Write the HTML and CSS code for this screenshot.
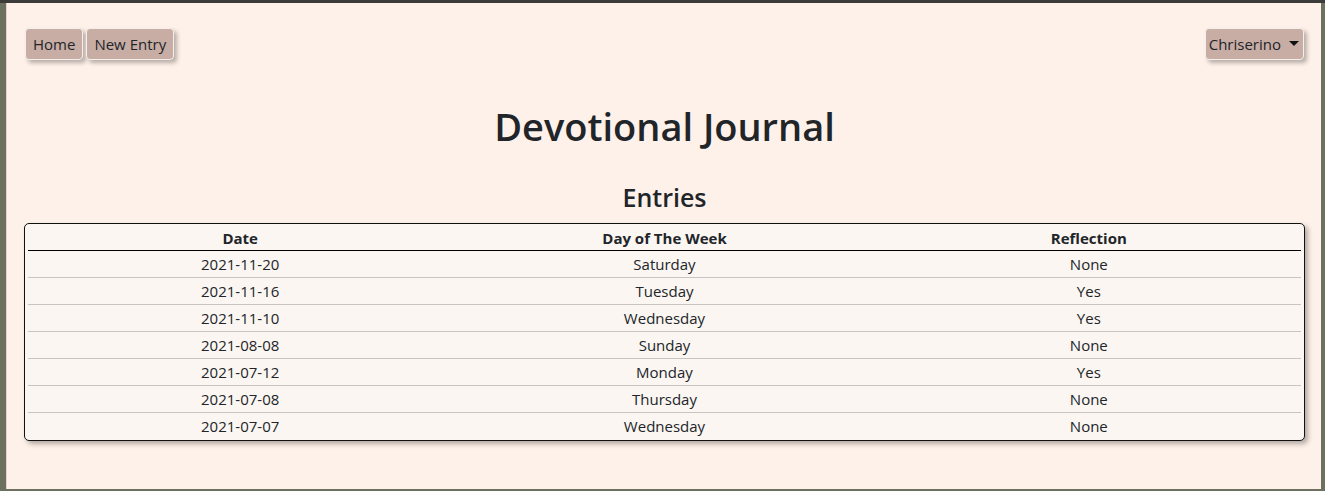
FILE: index.html
```html
<!DOCTYPE html>
<html lang="en">
<head>
<meta charset="utf-8">
<title>Devotional Journal</title>
<link rel="stylesheet" href="styles.css">
</head>
<body>
<div class="frame">
  <nav class="nav">
    <div class="nav-left">
      <a class="btn" href="#">Home</a>
      <a class="btn" href="#">New Entry</a>
    </div>
    <div class="nav-right">
      <a class="btn dropdown" href="#">Chriserino<span class="caret"></span></a>
    </div>
  </nav>
  <h1 class="title">Devotional Journal</h1>
  <h2 class="subtitle">Entries</h2>
  <div class="card">
    <table class="entries">
      <thead>
        <tr><th>Date</th><th>Day of The Week</th><th>Reflection</th></tr>
      </thead>
      <tbody>
        <tr><td>2021-11-20</td><td>Saturday</td><td>None</td></tr>
        <tr><td>2021-11-16</td><td>Tuesday</td><td>Yes</td></tr>
        <tr><td>2021-11-10</td><td>Wednesday</td><td>Yes</td></tr>
        <tr><td>2021-08-08</td><td>Sunday</td><td>None</td></tr>
        <tr><td>2021-07-12</td><td>Monday</td><td>Yes</td></tr>
        <tr><td>2021-07-08</td><td>Thursday</td><td>None</td></tr>
        <tr><td>2021-07-07</td><td>Wednesday</td><td>None</td></tr>
      </tbody>
    </table>
  </div>
</div>
</body>
</html>
```
FILE: styles.css
```css
* { box-sizing: border-box; }
html, body { margin: 0; padding: 0; }
body {
  background: #6c705f;
  border-top: 3px solid #3b3c3a;
  height: 491px;
  overflow: hidden;
  font-family: "Open Sans", "Noto Sans", sans-serif;
  color: #212529;
}
.frame {
  margin: 0 4px 0 6px;
  height: 486px;
  background: #fef1e9;
  padding: 25px 16px 0 17px;
  border-left: 1px solid #e6d2d4;
}
.nav {
  display: flex;
  justify-content: space-between;
  align-items: flex-start;
  padding: 0 1px;
}
.nav-left { display: flex; gap: 3px; }
.btn {
  display: inline-flex;
  align-items: center;
  height: 32px;
  padding: 0 7px;
  font-size: 15px;
  color: #212529;
  text-decoration: none;
  background: #c8ada5;
  border: 1px solid #f6eeea;
  border-radius: 4px;
  box-shadow: 3px 3px 4px rgba(0,0,0,0.28);
}
.dropdown { padding: 0 4px 0 3px; }
.caret {
  display: inline-block;
  margin-left: 8px;
  width: 0; height: 0;
  border-top: 5px solid #111;
  border-left: 5px solid transparent;
  border-right: 5px solid transparent;
  margin-top: -2px;
}
.title {
  text-align: center;
  font-size: 38px;
  font-weight: 600;
  line-height: 48px;
  margin: 42px 0 0;
}
.subtitle {
  text-align: center;
  font-size: 25px;
  font-weight: 600;
  line-height: 32px;
  margin: 31px 0 10px;
}
.card {
  background: #fbf6f2;
  border: 1px solid #111;
  border-radius: 5px;
  padding: 2px 3px 1px;
  box-shadow: 3px 3px 5px rgba(0,0,0,0.3);
}
.entries {
  width: 100%;
  border-collapse: collapse;
  table-layout: fixed;
  font-size: 15px;
}
.entries th {
  font-weight: 700;
  height: 24px;
  padding: 0;
  border-bottom: 1px solid #000;
  text-align: center;
  vertical-align: middle;
}
.entries td {
  height: 27px;
  padding: 0;
  text-align: center;
  vertical-align: middle;
  border-bottom: 1px solid #c8c4c1;
}
.entries tbody tr:last-child td { border-bottom: none; height: 27px; }
```
